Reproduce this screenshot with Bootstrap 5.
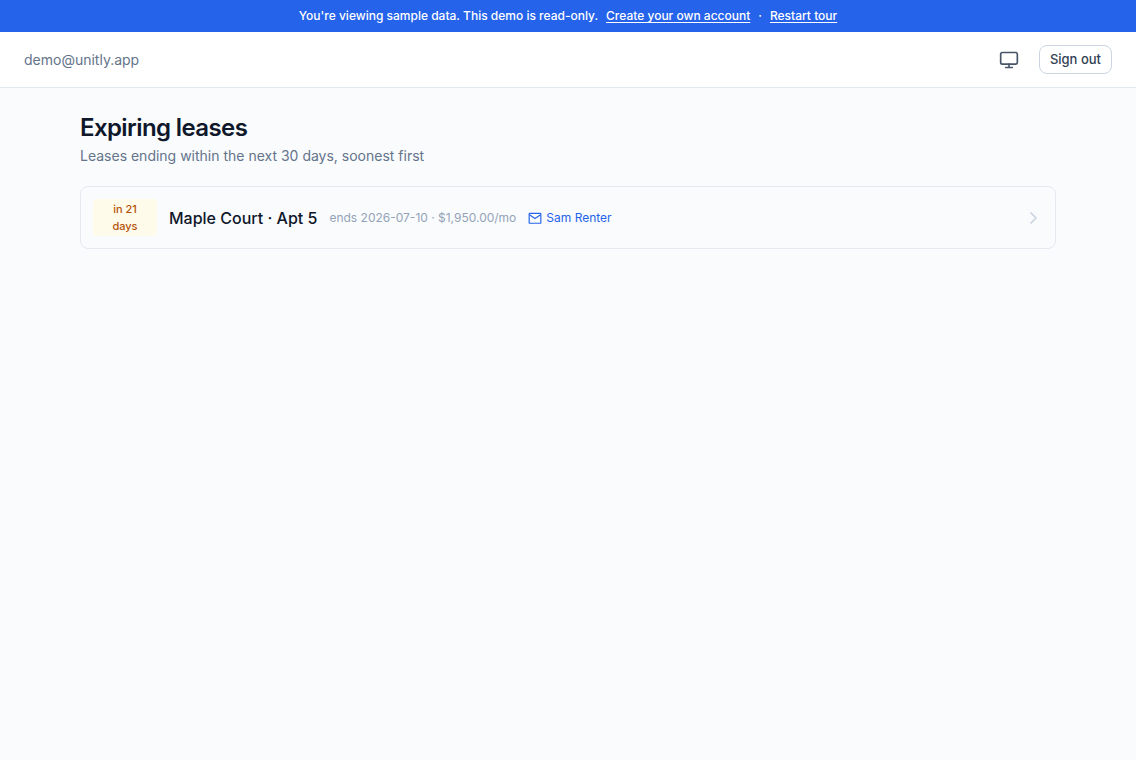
<!DOCTYPE html>
<html lang="en">
<head>
<meta charset="utf-8">
<meta name="viewport" content="width=device-width, initial-scale=1">
<title>Expiring leases</title>
<link href="https://cdn.jsdelivr.net/npm/bootstrap@5.3.0/dist/css/bootstrap.min.css" rel="stylesheet">
<style>
  body { font-family: Inter, sans-serif; background: #f9fbfd; color: #0f172a; font-size: 14px; line-height: 20px; }
  .demo-bar { background: #2563eb; height: 32px; font-size: 12px; line-height: 16px; }
  .demo-bar a { text-underline-offset: 2px; }
  .topbar { height: 56px; border-bottom: 1px solid #e2e8f0; }
  .slate { color: #64748b; }
  .user-mail { padding-top: 1px; }
  .btn-theme { color: #475569; margin-right: 20px; }
  .btn-signout { font-size: 13px; line-height: 19.5px; font-weight: 500; padding: 4px 10px; color: #334155; border: 1px solid #cbd5e1; border-radius: 8px; background: #fff; }
  .page { max-width: 976px; padding-top: 24px; }
  .page h1 { font-size: 24px; line-height: 32px; font-weight: 600; letter-spacing: -.6px; }
  .page p { margin: 2px 0 0; }
  .lease { height: 63px; margin-top: 20px; padding: 0 14px 0 12px; gap: 12px; border: 1px solid #e5e9f0; border-radius: 8px; color: #0f172a; }
  .due { width: 64px; font-size: 11px; line-height: 16.5px; font-weight: 500; padding: 2px 8px; color: #b45309; background: #fffbeb; border-radius: 4px; }
  .unit { font-size: 16px; line-height: 24px; font-weight: 500; }
  .meta { font-size: 12px; line-height: 16px; color: #94a3b8; }
  .mail { font-size: 12px; line-height: 16px; color: #2563eb; gap: 4px; }
  svg { fill: none; stroke: currentColor; stroke-width: 2; stroke-linecap: round; stroke-linejoin: round; flex: none; }
  .chevron { color: #cbd5e1; stroke-width: 2.6; }
</style>
</head>
<body>
  <div class="demo-bar d-flex justify-content-center align-items-center text-white fw-medium">
    <span>You're viewing sample data. This demo is read-only.</span>
    <a href="#" class="text-white ms-2">Create your own account</a>
    <span class="mx-2">·</span>
    <a href="#" class="text-white">Restart tour</a>
  </div>
  <header class="topbar bg-white d-flex align-items-center justify-content-between px-4">
    <span class="slate user-mail">demo@unitly.app</span>
    <div class="d-flex align-items-center">
      <button class="btn btn-theme p-0 border-0 d-flex" aria-label="Theme">
        <svg width="20" height="20" viewBox="0 0 24 24"><rect x="2" y="3" width="20" height="14" rx="2"/><path d="M8 21h8M12 17v4"/></svg>
      </button>
      <button class="btn btn-signout">Sign out</button>
    </div>
  </header>
  <main class="page mx-auto">
    <h1 class="mb-0">Expiring leases</h1>
    <p class="slate">Leases ending within the next 30 days, soonest first</p>
    <div class="lease d-flex align-items-center">
      <span class="due text-center">in 21 days</span>
      <span class="unit">Maple Court · Apt 5</span>
      <span class="meta">ends 2026-07-10 · $1,950.00/mo</span>
      <a href="#" class="mail d-flex align-items-center text-decoration-none">
        <svg width="14" height="14" viewBox="0 0 24 24"><rect x="2" y="4" width="20" height="17" rx="1"/><path d="m3 7 9 6 9-6"/></svg>
        Sam Renter
      </a>
      <svg class="chevron ms-auto" width="16" height="16" viewBox="0 0 24 24"><path d="m9 4.5 7.5 7.5L9 19.5"/></svg>
    </div>
  </main>
<script src="https://cdn.jsdelivr.net/npm/bootstrap@5.3.0/dist/js/bootstrap.bundle.min.js"></script>
</body>
</html>
